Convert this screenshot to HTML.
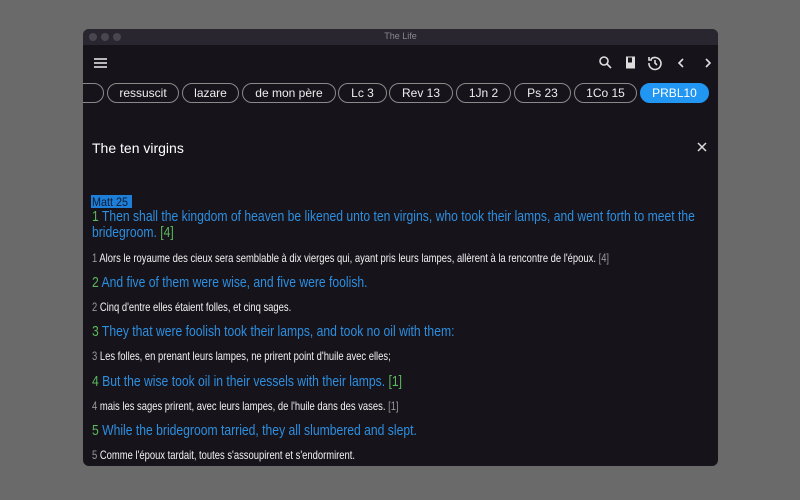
<!DOCTYPE html>
<html><head><meta charset="utf-8"><style>
*{margin:0;padding:0;box-sizing:border-box}
body{width:800px;height:500px;background:#6a6a6a;position:relative;overflow:hidden;font-family:"Liberation Sans",sans-serif}
.win{position:absolute;left:83px;top:29px;width:635px;height:437px;background:#16131a;border-radius:6px;overflow:hidden}
.tb{position:absolute;left:0;top:0;width:100%;height:16px;background:#2a2630}
.dot{position:absolute;top:4px;width:8px;height:8px;border-radius:50%;background:#4a4650}
.ttl{position:absolute;top:2px;left:0;width:100%;text-align:center;font-size:9px;color:#8a8690}
.chip{position:absolute;top:54px;height:20px;border:1px solid #8a8a8a;border-radius:10px;color:#eee;font-size:12px;text-align:center;line-height:18px;white-space:nowrap}
.l{position:absolute;left:9px;white-space:nowrap;transform-origin:left center}
.en{font-size:15px;color:#2d8fe0;transform:scaleX(.81)}
.fr{font-size:12px;color:#f2f2f2;transform:scaleX(.785)}
.g{color:#5cb85c}.n{color:#999}
</style></head><body>
<div class="win">
<div class="tb"><div class="dot" style="left:6px"></div><div class="dot" style="left:18px"></div><div class="dot" style="left:30px"></div><div class="ttl">The Life</div></div>
<svg style="position:absolute;left:11px;top:29px" width="13" height="10"><path d="M0 1H13M0 5H13M0 9H13" stroke="#eee" stroke-width="1.6"/></svg>
<svg style="position:absolute;left:515px;top:26px" width="115" height="16" fill="none" stroke="#ddd" stroke-width="1.6">
<circle cx="6" cy="6" r="4"/><path d="M9 9L13 13"/>
<rect x="28" y="1.5" width="9" height="12" fill="#ddd" stroke="none"/><rect x="30" y="2.5" width="4" height="5" fill="#16131a" stroke="none"/>
<path d="M51 8A6 6 0 1 0 53 4M51 2V5H54M57 5V8L59 10"/>
<path d="M85 4L81 8L85 12"/><path d="M108 4L112 8L108 12"/>
</svg>
<div class="chip" style="left:-10px;width:31px"></div>
<div class="chip" style="left:24px;width:72px">ressuscit</div>
<div class="chip" style="left:99px;width:57px">lazare</div>
<div class="chip" style="left:159px;width:94px">de mon père</div>
<div class="chip" style="left:255px;width:49px">Lc 3</div>
<div class="chip" style="left:306px;width:64px">Rev 13</div>
<div class="chip" style="left:373px;width:55px">1Jn 2</div>
<div class="chip" style="left:431px;width:57px">Ps 23</div>
<div class="chip" style="left:491px;width:63px">1Co 15</div>
<div class="chip" style="left:557px;width:69px;background:#2196f3;border-color:#2196f3;color:#fff">PRBL10</div>
<div style="position:absolute;left:9px;top:111px;font-size:14px;color:#fff">The ten virgins</div>
<svg style="position:absolute;left:614px;top:113px" width="10" height="10"><path d="M1 1L9 9M9 1L1 9" stroke="#ddd" stroke-width="1.5"/></svg>
<div style="position:absolute;left:8px;top:166px;width:41px;height:13px;background:#1e7fd8"></div>
<div class="l" style="top:166px;font-size:12px;color:#0b1a33;transform:scaleX(.9)">Matt 25</div>
<div class="l en" style="top:179px"><span class="g">1</span> Then shall the kingdom of heaven be likened unto ten virgins, who took their lamps, and went forth to meet the</div>
<div class="l en" style="top:195px">bridegroom. <span class="g">[4]</span></div>
<div class="l fr" style="top:222px"><span class="n">1</span> Alors le royaume des cieux sera semblable à dix vierges qui, ayant pris leurs lampes, allèrent à la rencontre de l'époux. <span class="n">[4]</span></div>
<div class="l en" style="top:245px"><span class="g">2</span> And five of them were wise, and five were foolish.</div>
<div class="l fr" style="top:271px"><span class="n">2</span> Cinq d'entre elles étaient folles, et cinq sages.</div>
<div class="l en" style="top:294px"><span class="g">3</span> They that were foolish took their lamps, and took no oil with them:</div>
<div class="l fr" style="top:320px"><span class="n">3</span> Les folles, en prenant leurs lampes, ne prirent point d'huile avec elles;</div>
<div class="l en" style="top:344px"><span class="g">4</span> But the wise took oil in their vessels with their lamps. <span class="g">[1]</span></div>
<div class="l fr" style="top:370px"><span class="n">4</span> mais les sages prirent, avec leurs lampes, de l'huile dans des vases. <span class="n">[1]</span></div>
<div class="l en" style="top:393px"><span class="g">5</span> While the bridegroom tarried, they all slumbered and slept.</div>
<div class="l fr" style="top:419px"><span class="n">5</span> Comme l'époux tardait, toutes s'assoupirent et s'endormirent.</div>
</div>
</body></html>
